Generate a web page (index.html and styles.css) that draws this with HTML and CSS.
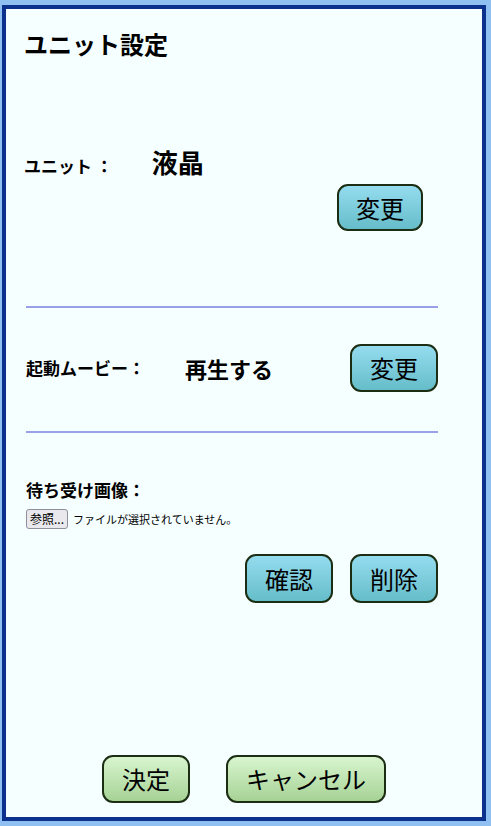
FILE: index.html
```html
<!DOCTYPE html>
<html lang="ja">
<head>
<meta charset="utf-8">
<title>ユニット設定</title>
<link rel="stylesheet" href="styles.css">
</head>
<body>
<div class="panel">
  <h1 class="title">ユニット設定</h1>

  <div class="row unit-row">
    <span class="label">ユニット ：</span>
    <span class="value value-unit">液晶</span>
  </div>
  <div class="actions actions-unit">
    <button class="btn btn-blue btn-unit">変更</button>
  </div>

  <hr class="divider divider-1">

  <div class="row movie-row">
    <span class="label">起動ムービー：</span>
    <span class="value value-movie">再生する</span>
    <button class="btn btn-blue btn-push">変更</button>
  </div>

  <hr class="divider divider-2">

  <div class="label wait-label">待ち受け画像：</div>
  <div class="file">
    <span class="file-btn">参照...</span>
    <span class="file-text">ファイルが選択されていません。</span>
  </div>
  <div class="actions actions-image">
    <button class="btn btn-blue">確認</button>
    <button class="btn btn-blue">削除</button>
  </div>

  <div class="footer">
    <button class="btn btn-green">決定</button>
    <button class="btn btn-green">キャンセル</button>
  </div>
</div>
</body>
</html>
```

FILE: styles.css
```css
* { box-sizing: border-box; }
html, body {
  margin: 0;
  padding: 0;
  background: #90c0f2;
}
body {
  font-family: "Noto Sans CJK JP", "Noto Sans", sans-serif;
  color: #000;
  padding: 5px 5px 5px 2px;
}
.panel {
  height: 816px;
  width: 484px;
  border: 4px solid #0c318c;
  background: #f5ffff;
  padding: 0 44px 14px 20px;
  display: flex;
  flex-direction: column;
}
.title {
  margin: 21px 0 0 -2px;
  font-size: 24px;
  line-height: 28px;
  font-weight: 700;
}
.row {
  display: flex;
  align-items: baseline;
}
.label {
  font-size: 17px;
  font-weight: 700;
  line-height: 20px;
}
.value {
  font-weight: 700;
}
.unit-row {
  margin-top: 90px;
  margin-left: -2px;
}
.value-unit {
  font-size: 26px;
  line-height: 28px;
  margin-left: 39px;
}
.actions {
  display: flex;
  justify-content: flex-end;
  gap: 17px;
}
.actions-unit {
  margin-top: 8px;
  padding-right: 15px;
}
.btn {
  font-family: "Noto Sans CJK JP", "Noto Sans", sans-serif;
  font-size: 24px;
  line-height: 28px;
  color: #000;
  border: 2px solid #1b2d12;
  border-radius: 11px;
  padding: 8px 18px;
  height: 48px;
  cursor: pointer;
}
.btn-unit {
  height: 47px;
  padding: 7px 17px;
}
.btn-blue {
  background: linear-gradient(#94dcef, #66bdca);
}
.btn-green {
  background: linear-gradient(#d8f5cf, #a6d295);
}
.divider {
  border: 0;
  height: 2px;
  background: #9aa0e6;
  margin: 0;
}
.divider-1 { margin-top: 75px; }
.divider-2 { margin-top: 0; }
.movie-row {
  align-items: center;
  height: 123px;
  padding-bottom: 3px;
}
.value-movie {
  font-size: 22px;
  line-height: 26px;
  margin-left: 40px;
}
.btn-push { margin-left: auto; }
.wait-label {
  margin-top: 47px;
}
.file {
  display: flex;
  align-items: center;
  margin-top: 9px;
  gap: 5px;
}
.file-btn {
  display: inline-block;
  height: 20px;
  padding: 0 3px;
  font-size: 12px;
  line-height: 18px;
  border: 1px solid #8f8f9d;
  border-radius: 3px;
  background: #e9e9ed;
}
.file-text {
  font-size: 11px;
  line-height: 14px;
}
.actions-image {
  margin-top: 25px;
}
.actions-image .btn { height: 49px; }
.footer {
  margin-top: auto;
  display: flex;
  justify-content: center;
  gap: 36px;
  padding-left: 24px;
}
```
